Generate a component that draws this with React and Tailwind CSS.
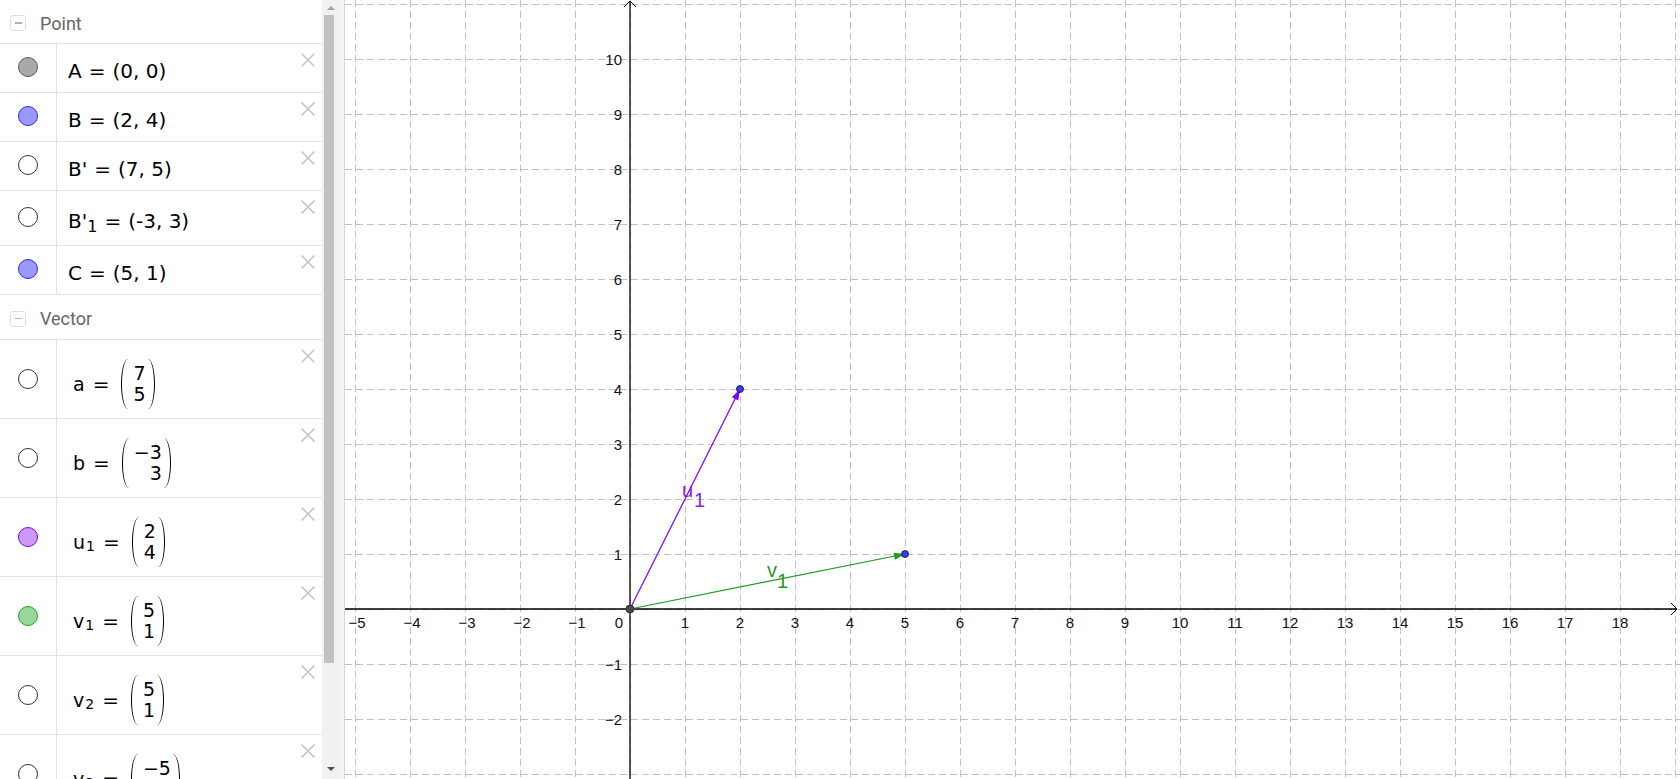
import React from "react";

const mathFont = { fontFamily: '"DejaVu Sans", sans-serif' };

// Algebra view rows
const points = [
  { id: "A", name: "A", value: "(0, 0)", dot: "bg-[#a9a9a9] border-[#5a5a5a]", h: "h-[49px]" },
  { id: "B", name: "B", value: "(2, 4)", dot: "bg-[#9999ff] border-[#2828f0]", h: "h-[49px]" },
  { id: "B1", name: "B'", value: "(7, 5)", dot: "bg-white border-[#333]", h: "h-[49px]" },
  { id: "B2", name: "B'", sub: "1", value: "(-3, 3)", dot: "bg-white border-[#333]", h: "h-[55px]" },
  { id: "C", name: "C", value: "(5, 1)", dot: "bg-[#9999ff] border-[#2828f0]", h: "h-[49px]" },
];

const vectors = [
  { id: "a", name: "a", top: "7", bottom: "5", dot: "bg-white border-[#333]" },
  { id: "b", name: "b", top: "−3", bottom: "3", dot: "bg-white border-[#333]" },
  { id: "u1", name: "u", sub: "1", top: "2", bottom: "4", dot: "bg-[#cc99ff] border-[#7f00ff]" },
  { id: "v1", name: "v", sub: "1", top: "5", bottom: "1", dot: "bg-[#99d699] border-[#2ea02e]" },
  { id: "v2", name: "v", sub: "2", top: "5", bottom: "1", dot: "bg-white border-[#333]" },
  { id: "v3", name: "v", sub: "3", top: "−5", bottom: "−1", dot: "bg-white border-[#333]" },
];

const DeleteIcon = () => (
  <svg width="16" height="16" viewBox="0 0 16 16" className="absolute right-[6px] top-[8px]">
    <path d="M1.5 1.5 L14.5 14.5 M14.5 1.5 L1.5 14.5" stroke="#c4c4c4" strokeWidth="1.6" fill="none" />
  </svg>
);

const GroupHeader = ({ title, h }) => (
  <div className={`${h} shrink-0 flex items-center border-b border-[#e2e2e2] pl-[10px] pt-[3px]`}>
    <div className="w-[16px] h-[16px] rounded-[3px] border border-[#dedede] flex items-center justify-center">
      <div className="w-[7px] h-[1.5px] bg-[#b0b0b0]" />
    </div>
    <span className="ml-[14px] text-[18px] text-[#666]" style={{ fontFamily: "Roboto, sans-serif" }}>
      {title}
    </span>
  </div>
);

const Paren = ({ right }) => (
  <div
    className={
      right
        ? "w-[7px] h-[50px] border-r-[1.6px] border-black rounded-[0_100%_100%_0/0_50%_50%_0]"
        : "w-[7px] h-[50px] border-l-[1.6px] border-black rounded-[100%_0_0_100%/50%_0_0_50%]"
    }
  />
);

const PointRow = ({ p }) => (
  <div className={`${p.h} shrink-0 relative flex border-b border-[#e2e2e2]`}>
    <div className="w-[57px] flex items-center justify-center border-r border-[#e2e2e2] pb-[3px]">
      <div className={`w-[20px] h-[20px] rounded-full border ${p.dot}`} />
    </div>
    <div className="flex-1 flex items-center pl-[11px] pt-[5px] text-[20px] text-black" style={mathFont}>
      <span>{p.name}</span>
      {p.sub && <span className="text-[16px] relative top-[6px]">{p.sub}</span>}
      <span className="ml-[7px]">=</span>
      <span className="ml-[7px]">{p.value}</span>
    </div>
    <DeleteIcon />
  </div>
);

const VectorRow = ({ v }) => (
  <div className="h-[79px] shrink-0 relative flex border-b border-[#e2e2e2]">
    <div className="w-[57px] flex items-center justify-center border-r border-[#e2e2e2]">
      <div className={`w-[20px] h-[20px] rounded-full border ${v.dot}`} />
    </div>
    <div className="flex-1 flex items-center pl-[16px] pt-[10px] text-black" style={mathFont}>
      <span className="text-[19px]">{v.name}</span>
      {v.sub && <span className="text-[14px] relative top-[4px] ml-[1px]">{v.sub}</span>}
      <span className="text-[20px] ml-[8px]">=</span>
      <div className="flex items-center ml-[12px]">
        <Paren />
        <div className="flex flex-col items-end text-[19px] leading-[21px] pl-[5px] pr-[2px]">
          <span>{v.top}</span>
          <span>{v.bottom}</span>
        </div>
        <Paren right />
      </div>
    </div>
    <DeleteIcon />
  </div>
);

// Graphics view geometry (local coords, graphics starts at x=345)
const OX = 285;
const OY = 609;
const U = 55;
const sx = (x) => OX + x * U;
const sy = (y) => OY - y * U;

const arrowHead = (x1, y1, x2, y2, len = 11, half = 3.6) => {
  const dx = x2 - x1;
  const dy = y2 - y1;
  const l = Math.hypot(dx, dy);
  const ux = dx / l;
  const uy = dy / l;
  const bx = x2 - ux * len;
  const by = y2 - uy * len;
  const px = -uy * half;
  const py = ux * half;
  return `${x2},${y2} ${bx + px},${by + py} ${bx - px},${by - py}`;
};

const Graphics = () => {
  const xs = [];
  for (let k = -5; k <= 19; k++) xs.push(k);
  const ys = [];
  for (let k = -3; k <= 11; k++) ys.push(k);
  const labelStyle = { fontFamily: '"Liberation Sans", Arial, sans-serif' };

  return (
    <svg width="1335" height="779" className="block">
      {/* grid */}
      {xs.map((k) => (
        <line key={"gx" + k} x1={sx(k) + 0.5} y1="0" x2={sx(k) + 0.5} y2="779" stroke="#c0c0c0" strokeWidth="1" strokeDasharray="7 4" />
      ))}
      {ys.map((k) => (
        <line key={"gy" + k} x1="0" y1={sy(k) + 0.5} x2="1335" y2={sy(k) + 0.5} stroke="#c0c0c0" strokeWidth="1" strokeDasharray="7 4" />
      ))}

      {/* axes */}
      <line x1="0" y1={OY} x2="1332" y2={OY} stroke="#000" strokeWidth="1.3" />
      <line x1={OX} y1="779" x2={OX} y2="1" stroke="#000" strokeWidth="1.3" />
      <path d={`M1326 ${OY - 6} L1332 ${OY} L1326 ${OY + 6}`} stroke="#000" strokeWidth="1" fill="none" />
      <path d={`M${OX - 6} 7 L${OX} 1 L${OX + 6} 7`} stroke="#000" strokeWidth="1" fill="none" />

      {/* axis labels */}
      <g style={labelStyle} fontSize="15" fill="#111">
        {xs
          .filter((k) => k !== 0 && k <= 18)
          .map((k) => (
            <text key={"lx" + k} x={sx(k) + (k < 0 ? 2 : 0)} y={OY + 19} textAnchor="middle">
              {k < 0 ? "−" + -k : k}
            </text>
          ))}
        {ys
          .filter((k) => k !== 0 && k >= -2 && k <= 10)
          .map((k) => (
            <text key={"ly" + k} x={OX - 8} y={sy(k) + 5.5} textAnchor="end">
              {k < 0 ? "−" + -k : k}
            </text>
          ))}
        <text x={OX - 7} y={OY + 19} textAnchor="end">0</text>
      </g>

      {/* vector u1 */}
      <line x1={OX} y1={OY} x2={sx(2)} y2={sy(4)} stroke="#7f00ff" strokeWidth="1.2" />
      <polygon points={arrowHead(OX, OY, sx(2), sy(4))} fill="#7f00ff" />
      {/* vector v1 */}
      <line x1={OX} y1={OY} x2={sx(5)} y2={sy(1)} stroke="#1f9a1f" strokeWidth="1.2" />
      <polygon points={arrowHead(OX, OY, sx(5), sy(1))} fill="#1f9a1f" />

      {/* points */}
      <circle cx={OX} cy={OY} r="4" fill="#4a4a4a" stroke="#222" strokeWidth="0.8" />
      <circle cx={sx(2)} cy={sy(4)} r="3.5" fill="#3a3aff" stroke="#111" strokeWidth="0.8" />
      <circle cx={sx(5)} cy={sy(1)} r="3.5" fill="#3a3aff" stroke="#111" strokeWidth="0.8" />

      {/* vector labels */}
      <g style={labelStyle} fontSize="20">
        <text x="337" y="497" fill="#8a1aff">
          u<tspan x="349" y="507">1</tspan>
        </text>
        <text x="422" y="577" fill="#1f9a1f">
          v<tspan x="432" y="588">1</tspan>
        </text>
      </g>
    </svg>
  );
};

export default function App() {
  return (
    <div className="w-full h-[779px] flex overflow-hidden bg-white">
      {/* Algebra view */}
      <div className="w-[322px] h-full shrink-0 overflow-hidden flex flex-col">
        <GroupHeader title="Point" h="h-[44px]" />
        {points.map((p) => (
          <PointRow key={p.id} p={p} />
        ))}
        <GroupHeader title="Vector" h="h-[45px]" />
        {vectors.map((v) => (
          <VectorRow key={v.id} v={v} />
        ))}
      </div>

      {/* scrollbar */}
      <div className="w-[17px] h-full shrink-0 bg-[#f1f1f1] flex flex-col items-center">
        <div className="h-[15px] flex items-center justify-center">
          <div className="w-0 h-0 border-l-[4px] border-r-[4px] border-b-[4px] border-l-transparent border-r-transparent border-b-[#a3a3a3]" />
        </div>
        <div className="w-[10px] h-[648px] bg-[#c1c1c1] ml-[-4px]" />
        <div className="flex-1" />
        <div className="h-[20px] flex items-center justify-center">
          <div className="w-0 h-0 border-l-[4px] border-r-[4px] border-t-[4px] border-l-transparent border-r-transparent border-t-[#505050]" />
        </div>
      </div>
      <div className="w-[6px] h-full shrink-0 bg-[#f3f3f3] border-r border-[#d6d6d6]" />

      {/* Graphics view */}
      <div className="flex-1 h-full overflow-hidden">
        <Graphics />
      </div>
    </div>
  );
}
